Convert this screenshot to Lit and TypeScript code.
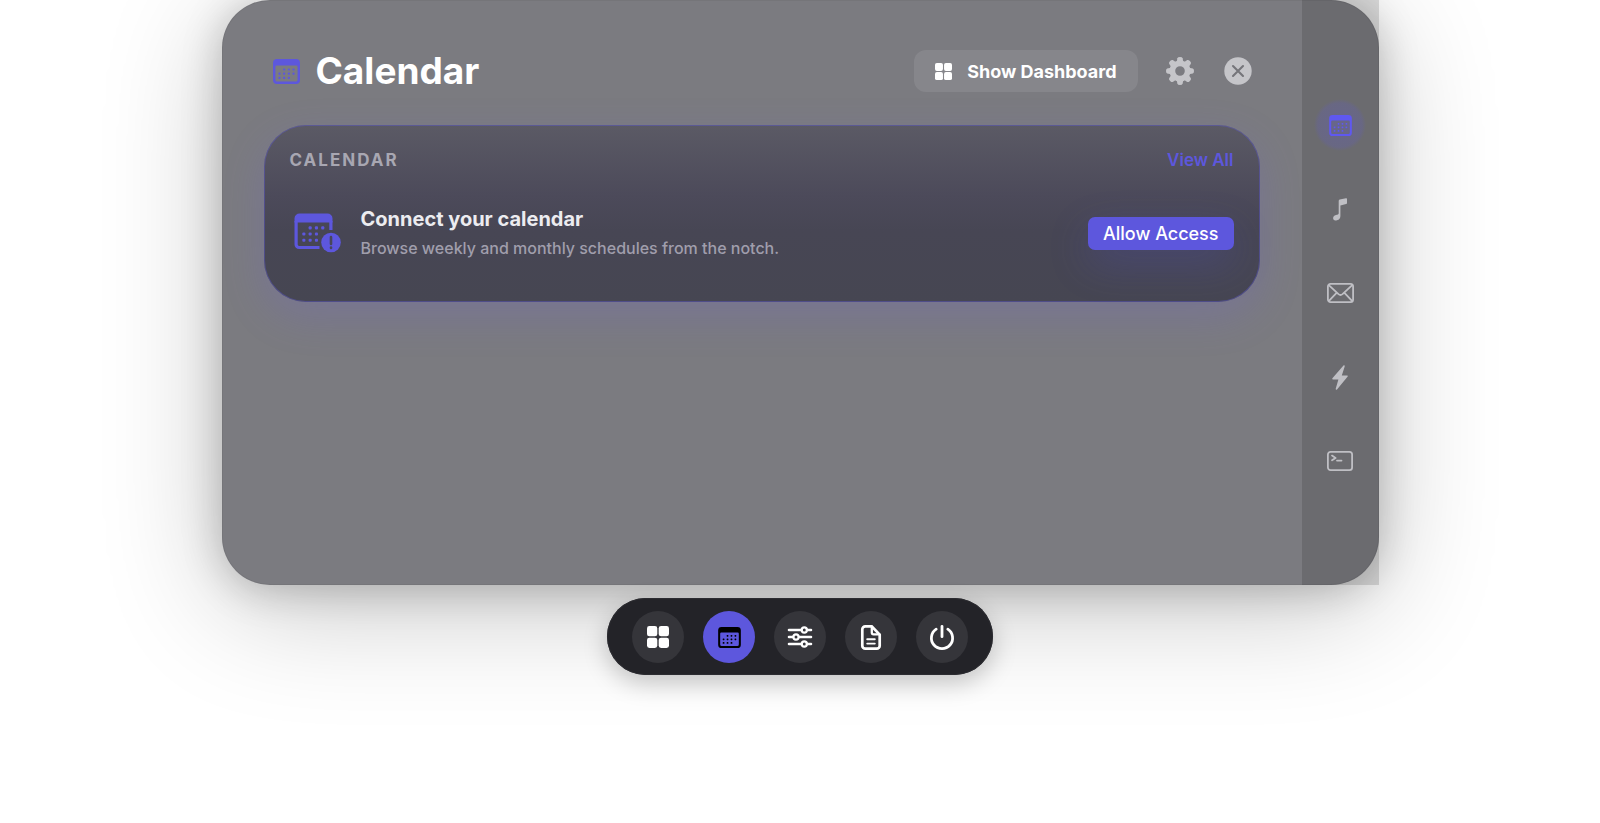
import { LitElement, html, svg, css } from "lit";
import { customElement, property } from "lit/decorators.js";

type IconName =
  | "calendar" | "calendar-alert" | "grid" | "gear" | "close" | "note"
  | "mail" | "bolt" | "terminal" | "sliders" | "document" | "power";

const dotCells = [[1, 0], [2, 0], [3, 0], [0, 1], [1, 1], [2, 1], [3, 1], [0, 2], [1, 2], [2, 2]];

const toothAngles = [0, 45, 90, 135, 180, 225, 270, 315];

const icons: Record<IconName, { box: string; body: unknown }> = {
  calendar: {
    box: "0 0 27 25",
    body: svg`
      <path fill-rule="evenodd" d="M4 0h19a4 4 0 0 1 4 4v17a4 4 0 0 1-4 4h-19a4 4 0 0 1-4-4v-17a4 4 0 0 1 4-4z
        M3.800 6.600a1.400 1.400 0 0 0-1.400 1.400v12.700a1.900 1.900 0 0 0 1.900 1.900h18.400a1.900 1.900 0 0 0 1.900-1.900v-12.700a1.400 1.400 0 0 0-1.400-1.400z"/>
      ${dotCells.map(([c, r]) => svg`<rect x=${5.4 + c * 4.7} y=${9.4 + r * 4.2} width="2.100" height="2.100" rx="0.7"/>`)}`,
  },
  "calendar-alert": {
    box: "0 0 47 40",
    body: svg`
      <path d="M0.500 9.500V5.500a5 5 0 0 1 5-5H33.500a5 5 0 0 1 5 5V9.500z"/>
      <path d="M2.100 8V31.500a3 3 0 0 0 3 3H25.500M36.900 8V17" fill="none" stroke="currentColor" stroke-width="3.200"/>
      ${dotCells.map(([c, r]) =>
        r > 0 && c > 2 ? null : svg`<rect x=${8.300 + c * 6.300} y=${13.300 + r * 6.200} width="3.100" height="3.100" rx="1"/>`)}
      <circle cx="37" cy="29.500" r="9.800"/>
      <path d="M37 24v7M37 34.600v.4" fill="none" stroke="#48475a" stroke-width="2.600" stroke-linecap="round"/>`,
  },
  grid: {
    box: "0 0 22 22",
    body: svg`
      <rect width="10.300" height="10.300" rx="2.400"/><rect x="11.700" width="10.300" height="10.300" rx="2.400"/>
      <rect y="11.700" width="10.300" height="10.300" rx="2.400"/><rect x="11.700" y="11.700" width="10.300" height="10.300" rx="2.400"/>`,
  },
  gear: {
    box: "-14 -14 28 28",
    body: svg`
      ${toothAngles.map((a) => svg`<path transform=${`rotate(${a})`} d="M-3.300-9L-2.600-12.800Q-2.300-14 0-14Q2.300-14 2.600-12.800L3.300-9z"/>`)}
      <path fill-rule="evenodd" d="M0-10.500a10.500 10.500 0 1 1 0 21a10.500 10.500 0 1 1 0-21zM0-4.800a4.800 4.800 0 1 0 0 9.600a4.800 4.800 0 1 0 0-9.600z"/>`,
  },
  close: {
    box: "0 0 28 28",
    body: svg`<circle cx="14" cy="14" r="13.700"/>
      <path d="M9 9l10 10M19 9L9 19" stroke="#75757a" stroke-width="2.100" stroke-linecap="round"/>`,
  },
  note: {
    box: "0 0 14 23",
    body: svg`<path d="M5.700 2.900Q5.700 1.800 6.700 1.500L13 .2Q14 0 14 1v4q0 .9-.9 1.100L7.400 7.400V18q0 3.300-3.400 4.300Q.4 23.200.1 20.400Q0 17.800 3 17Q5.700 16.500 5.700 15.500z"/>`,
  },
  mail: {
    box: "0 0 27 20",
    body: svg`<g fill="none" stroke="currentColor" stroke-width="1.800" stroke-linejoin="round">
      <rect x=".9" y=".9" width="25.200" height="18.200" rx="2.600"/>
      <path d="M1.500 1.800l10 9.300q2 1.700 4 0l10-9.300M1.500 18.300l8.300-8.600M25.500 18.300l-8.300-8.600"/></g>`,
  },
  bolt: {
    box: "0 0 16 25",
    body: svg`<path d="M11.700.3L.4 13.300Q-.2 14.300.9 14.400H6.400L3.700 23.700Q3.700 25.300 5 24.600L15.700 11.600Q16.200 10.600 15.100 10.500H9.800L12.700 1.500Q12.900-.2 11.700.3z"/>`,
  },
  terminal: {
    box: "0 0 26 20",
    body: svg`<g fill="none" stroke="currentColor" stroke-width="1.800" stroke-linecap="round" stroke-linejoin="round">
      <rect x=".9" y=".9" width="24.200" height="18.200" rx="2.600"/>
      <path d="M5 4.600l3.600 2.300L5 9.200M10 9.600h4.500"/></g>`,
  },
  sliders: {
    box: "0 0 24 22",
    body: svg`<g fill="none" stroke="currentColor" stroke-width="2.600" stroke-linecap="round">
      <path d="M1 4h12.500M19 4h4M1 11h4M11 11h12M1 18h12.500M19 18h4"/>
      <circle cx="16.300" cy="4" r="2.600" stroke-width="2.200"/><circle cx="8" cy="11" r="2.600" stroke-width="2.200"/><circle cx="16.300" cy="18" r="2.600" stroke-width="2.200"/></g>`,
  },
  document: {
    box: "0 0 20 25",
    body: svg`<g fill="none" stroke="currentColor" stroke-width="2.700" stroke-linecap="round" stroke-linejoin="round">
      <path d="M4.300 1.300H10.600L18.700 9.600V20.700a3 3 0 0 1-3 3H4.300a3 3 0 0 1-3-3V4.300a3 3 0 0 1 3-3z"/>
      <path d="M10.800 1.600V7.600a1.800 1.800 0 0 0 1.800 1.800H18.400" stroke-width="2.300"/><path d="M6.200 14.300h7.600M6.200 18.600h7.600" stroke-width="1.900"/></g>`,
  },
  power: {
    box: "0 0 24 25",
    body: svg`<path d="M6.200 4.200a10.600 10.600 0 1 0 11.600 0M12 1.300v10.400" fill="none" stroke="currentColor" stroke-width="2.800" stroke-linecap="round"/>`,
  },
};

@customElement("notch-icon")
export class NotchIcon extends LitElement {
  @property() name: IconName = "grid";

  static styles = css`
    :host { display: block; color: inherit; }
    .glyph { display: block; width: 100%; height: 100%; fill: currentColor; overflow: visible; }
  `;

  render() {
    const icon = icons[this.name];
    return html`<svg class="glyph" viewBox=${icon.box} aria-hidden="true">${icon.body}</svg>`;
  }
}

const railItems: { icon: IconName; label: string; size: string; active?: boolean }[] = [
  { icon: "calendar", label: "Calendar", size: "s-cal", active: true },
  { icon: "note", label: "Music", size: "s-note" },
  { icon: "mail", label: "Mail", size: "s-mail" },
  { icon: "bolt", label: "Shortcuts", size: "s-bolt" },
  { icon: "terminal", label: "Terminal", size: "s-term" },
];

const dockItems: { icon: IconName; label: string; size: string; active?: boolean }[] = [
  { icon: "grid", label: "Dashboard", size: "s-grid" },
  { icon: "calendar", label: "Calendar", size: "s-cal", active: true },
  { icon: "sliders", label: "Controls", size: "s-sliders" },
  { icon: "document", label: "Notes", size: "s-doc" },
  { icon: "power", label: "Quit", size: "s-power" },
];

@customElement("app-root")
export class AppRoot extends LitElement {
  static styles = css`
    :host {
      --accent: #5d57dd;
      display: block;
      min-height: 100vh;
      overflow: hidden;
      background: #fff;
      font-family: Inter, "Liberation Sans", sans-serif;
      color: #fff;
    }
    button { font: inherit; color: inherit; border: 0; margin: 0; padding: 0; background: none; cursor: pointer; }
    h1, h2, h3, p { margin: 0; }

    .stage { display: flex; flex-direction: column; align-items: center; gap: 13px; }
    .panel {
      box-sizing: border-box;
      display: flex;
      width: 94%;
      max-width: 1157px;
      border-radius: 48px;
      background: #7b7b80;
      box-shadow: inset 0 0 0 1px rgba(70, 70, 74, 0.12), 0 20px 120px rgba(0, 0, 0, 0.24), 0 4px 40px rgba(0, 0, 0, 0.22);
    }
    .body { flex: 1; min-width: 0; padding: 49px 42px; }

    .header { display: flex; align-items: center; padding: 0 8px 0 9px; height: 44px; }
    .header-icon { width: 27px; height: 25px; color: var(--accent); }
    .title { margin-left: 16px; font-size: 37px; line-height: 44px; font-weight: 700; flex: 1; }
    .dash {
      display: flex; align-items: center; gap: 15px;
      height: 42px; padding: 0 21px; border-radius: 12px;
      background: rgba(255, 255, 255, 0.09);
      font-size: 18px; font-weight: 700; white-space: nowrap;
    }
    .dash-icon { width: 17px; height: 17px; }
    .tool { margin-left: 28px; width: 28px; height: 28px; color: #c5c5c9; }
    .tool + .tool { margin-left: 30px; }

    .card {
      margin-top: 32px;
      padding: 24px 26px 42px;
      border-radius: 42px;
      background: linear-gradient(#5b5a65, #4c4a5a 40%, #474654 60%, #464652);
      box-shadow: inset 0 0 0 1px rgba(93, 87, 221, 0.4), 0 14px 40px rgba(110, 95, 220, 0.22);
    }
    .card-head { display: flex; justify-content: space-between; align-items: center; line-height: 22px; font-size: 17px; }
    .eyebrow { font-size: 17px; font-weight: 700; letter-spacing: 2px; color: #a8a7b2; }
    .view-all { font-weight: 600; color: var(--accent); text-decoration: none; }
    .connect { display: flex; align-items: center; margin-top: 35px; padding-left: 4px; }
    .alert-icon { width: 47px; height: 40px; color: var(--accent); }
    .copy { flex: 1; min-width: 0; margin-left: 20px; }
    .connect-title { font-size: 20px; line-height: 26px; font-weight: 700; color: #ececf0; }
    .connect-text { font-size: 16px; line-height: 24px; margin-top: 4px; font-weight: 500; color: #a09eac; }
    .allow {
      height: 33px; padding: 0 15px; border-radius: 7px;
      background: var(--accent); font-size: 18px; font-weight: 500; white-space: nowrap;
      box-shadow: 0 14px 40px rgba(80, 80, 220, 0.24);
    }

    .rail {
      display: flex; flex-direction: column; align-items: center; gap: 32px;
      width: 77px; padding: 99px 0 98px;
      background: rgba(0, 0, 0, 0.13);
      color: #bfbfc4;
    }
    .rail-btn { display: grid; place-items: center; width: 52px; height: 52px; border-radius: 26px; }
    .rail-btn.on {
      color: #5f58f0;
      background: radial-gradient(closest-side, rgba(93, 87, 221, 0.26), rgba(93, 87, 221, 0.18) 85%, rgba(93, 87, 221, 0));
    }

    .dock {
      display: flex; gap: 19px; padding: 13px 25px 12px;
      border-radius: 39px;
      background: #232328;
      box-shadow: inset 0 0 0 1px #2c2c31, 0 8px 24px rgba(0, 0, 0, 0.22);
      position: relative;
    }
    .dock-btn { display: grid; place-items: center; width: 52px; height: 52px; border-radius: 26px; background: #35353a; }
    .dock-btn.on { background: var(--accent); color: #000; }

    .s-cal { width: 23px; height: 21px; }
    .s-note { width: 14px; height: 23px; }
    .s-mail { width: 27px; height: 20px; }
    .s-bolt { width: 16px; height: 25px; }
    .s-term { width: 26px; height: 20px; }
    .s-grid { width: 22px; height: 22px; }
    .s-sliders { width: 24px; height: 22px; }
    .s-doc { width: 20px; height: 25px; }
    .s-power { width: 24px; height: 25px; }
  `;

  render() {
    return html`
      <div class="stage">
        <main class="panel">
          <section class="body">
            <header class="header">
              <notch-icon class="header-icon" name="calendar"></notch-icon>
              <h1 class="title">Calendar</h1>
              <button class="dash" type="button">
                <notch-icon class="dash-icon" name="grid"></notch-icon><span>Show Dashboard</span>
              </button>
              <button class="tool" type="button" aria-label="Settings"><notch-icon name="gear"></notch-icon></button>
              <button class="tool" type="button" aria-label="Close"><notch-icon name="close"></notch-icon></button>
            </header>
            <section class="card">
              <div class="card-head">
                <h2 class="eyebrow">CALENDAR</h2>
                <a class="view-all" href="#all">View All</a>
              </div>
              <div class="connect">
                <notch-icon class="alert-icon" name="calendar-alert"></notch-icon>
                <div class="copy">
                  <h3 class="connect-title">Connect your calendar</h3>
                  <p class="connect-text">Browse weekly and monthly schedules from the notch.</p>
                </div>
                <button class="allow" type="button">Allow Access</button>
              </div>
            </section>
          </section>
          <nav class="rail" aria-label="Sections">
            ${railItems.map((i) => html`
              <button class="rail-btn ${i.active ? "on" : ""}" type="button" aria-label=${i.label}>
                <notch-icon class=${i.size} name=${i.icon}></notch-icon>
              </button>`)}
          </nav>
        </main>
        <nav class="dock" aria-label="Dock">
          ${dockItems.map((i) => html`
            <button class="dock-btn ${i.active ? "on" : ""}" type="button" aria-label=${i.label}>
              <notch-icon class=${i.size} name=${i.icon}></notch-icon>
            </button>`)}
        </nav>
      </div>
    `;
  }
}
